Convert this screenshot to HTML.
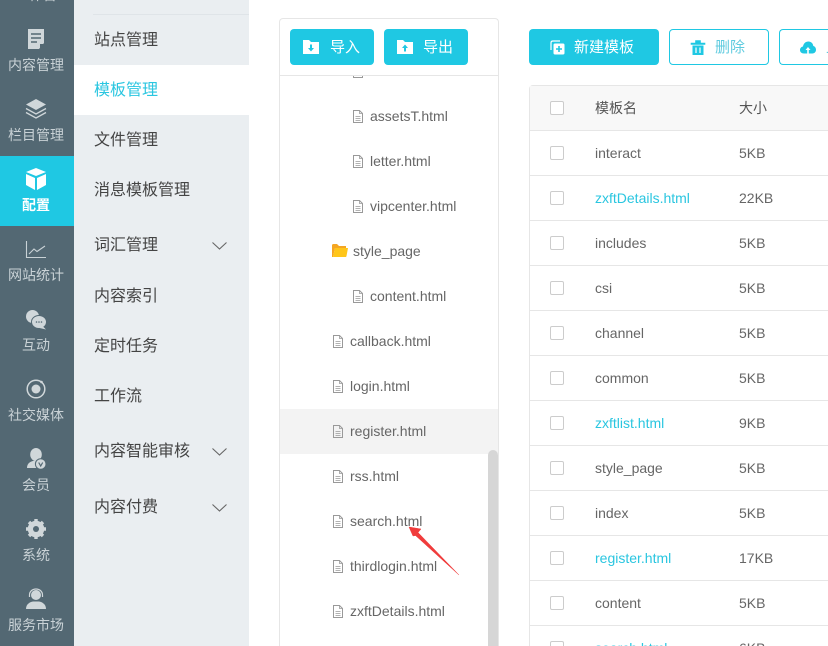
<!DOCTYPE html>
<html lang="zh"><head><meta charset="utf-8"><style>
html,body{margin:0;padding:0;background:#fff;width:828px;height:646px;overflow:hidden}
#w{position:relative;width:828px;height:646px;overflow:hidden;font-family:"Liberation Sans","Noto Sans CJK SC",sans-serif;font-size:14px;color:#666}
.a{position:absolute}
.side{left:0;top:0;width:74px;height:646px;background:#536873}
.lab{position:absolute;left:0;width:72px;text-align:center;color:#c9d2d6;font-size:14px;line-height:20px;white-space:nowrap}
.sub{left:74px;top:0;width:175px;height:646px;background:#eaeef1}
.m{position:absolute;left:94px;font-size:16px;line-height:24px;color:#444;white-space:nowrap}
.t{position:absolute;font-size:14px;line-height:20px;color:#666;white-space:nowrap}
.btn{position:absolute;top:29px;height:36px;border-radius:4px;box-sizing:border-box;font-size:15px;line-height:36px;white-space:nowrap}
.f{background:#1fc8e3;color:#fff}
.o{border:1px solid #1fc8e3;color:#5fcbdf;line-height:34px;background:#fff}
.cb{position:absolute;left:550px;width:14px;height:14px;border:1px solid #ccc;border-radius:2px;box-sizing:border-box;background:#fff}
.ln{position:absolute;left:530px;width:298px;height:1px;background:#e6e6e6}
.lnk{color:#2ac6e0}
svg{position:absolute;overflow:visible}
</style></head><body><div id="w">
<div class="a side"></div>
<div class="a" style="left:0;top:156px;width:74px;height:70px;background:#1fc8e3"></div>
<div class="a" style="left:0;top:0;width:72px;height:5px;overflow:hidden"><div class="lab" style="top:-15px">工作台</div></div>
<svg style="left:27px;top:29px" width="18" height="20" viewBox="0 0 18 20"><path d="M1 0H17V14L12 20H1Z" fill="#d0d7da"/><path d="M4 5H14M4 9H14M4 13H10" stroke="#536873" stroke-width="1.600"/><path d="M13 20V15H18" fill="#536873"/></svg>
<div class="lab" style="top:55px">内容管理</div>
<svg style="left:26px;top:98px" width="20" height="22" viewBox="0 0 20 22"><path d="M10 1L20 6.500 10 12 0 6.500Z" fill="#d0d7da"/><path d="M0 10.500L10 16 20 10.500M0 14.500L10 20 20 14.500" fill="none" stroke="#d0d7da" stroke-width="1.300"/></svg>
<div class="lab" style="top:125px">栏目管理</div>
<svg style="left:26px;top:168px" width="20" height="22" viewBox="0 0 20 22"><path d="M10 0L20 4 10 8 0 4Z" fill="#fff"/><path d="M0 6L9 10V22L0 17Z" fill="#fff"/><path d="M20 6L11 10V22L20 17Z" fill="#fff"/></svg>
<div class="lab" style="top:195px;color:#fff;font-weight:bold">配置</div>
<svg style="left:26px;top:241px" width="20" height="17" viewBox="0 0 20 17"><path d="M.5 0V16.500H20M3 13L8 8 11 10.500 19 5" fill="none" stroke="#c9d2d6" stroke-width="1.100"/></svg>
<div class="lab" style="top:265px">网站统计</div>
<svg style="left:26px;top:310px" width="21" height="20" viewBox="0 0 21 20"><ellipse cx="6.500" cy="6.500" rx="6.500" ry="6.500" fill="#d0d7da"/><ellipse cx="13" cy="12" rx="7.500" ry="6.500" fill="#d0d7da" stroke="#536873" stroke-width="1"/><path d="M16.500 16L20 19.500 13.500 18Z" fill="#d0d7da"/><circle cx="10.500" cy="12" r=".8" fill="#536873"/><circle cx="13" cy="12" r=".8" fill="#536873"/><circle cx="15.500" cy="12" r=".8" fill="#536873"/></svg>
<div class="lab" style="top:335px">互动</div>
<svg style="left:26px;top:379px" width="20" height="20" viewBox="0 0 20 20"><circle cx="10" cy="10" r="8.800" fill="none" stroke="#d0d7da" stroke-width="1.500"/><circle cx="10" cy="10" r="4.500" fill="#d0d7da"/><circle cx="15.500" cy="3" r="1.300" fill="#d0d7da"/></svg>
<div class="lab" style="top:405px">社交媒体</div>
<svg style="left:26px;top:448px" width="20" height="22" viewBox="0 0 20 22"><ellipse cx="10" cy="6.500" rx="5.800" ry="6.500" fill="#d0d7da"/><path d="M1 20C1 15.500 4 13 10 12.500 13 12.500 15 13.500 16 15L10 20Z" fill="#d0d7da"/><circle cx="14.700" cy="16" r="5.300" fill="#d0d7da" stroke="#536873" stroke-width="1"/><path d="M12.700 14.500L14.700 18 16.700 14.500" fill="none" stroke="#536873" stroke-width="1.200"/></svg>
<div class="lab" style="top:475px">会员</div>
<svg style="left:26px;top:519px" width="20" height="20" viewBox="0 0 20 20"><circle cx="10" cy="10" r="6" fill="none" stroke="#d0d7da" stroke-width="4.500"/><path d="M10 0V20M0 10H20M3 3L17 17M17 3L3 17" stroke="#d0d7da" stroke-width="3.400"/><circle cx="10" cy="10" r="3" fill="#536873"/></svg>
<div class="lab" style="top:545px">系统</div>
<svg style="left:26px;top:588px" width="20" height="22" viewBox="0 0 20 22"><circle cx="10" cy="7" r="5" fill="#d0d7da"/><path d="M3.500 9V7C3.500 3.300 6.500 1 10 1S16.500 3.300 16.500 7V9" fill="none" stroke="#d0d7da" stroke-width="1.200"/><path d="M0 21C0 16 4 14 7 13.500H13C16 14 20 16 20 21Z" fill="#d0d7da"/></svg>
<div class="lab" style="top:615px">服务市场</div>

<div class="a sub"></div>
<div class="a" style="left:93px;top:14px;width:156px;height:1px;background:#dfe4e8"></div>
<div class="a" style="left:74px;top:65px;width:175px;height:50px;background:#fff"></div>
<div class="m" style="top:27px;margin-top:2px">站点管理</div>
<div class="m" style="top:79px;color:#2ac6e0">模板管理</div>
<div class="m" style="top:129px">文件管理</div>
<div class="m" style="top:179px">消息模板管理</div>
<div class="m" style="top:234px">词汇管理</div>
<div class="m" style="top:285px">内容索引</div>
<div class="m" style="top:335px">定时任务</div>
<div class="m" style="top:385px">工作流</div>
<div class="m" style="top:440px">内容智能审核</div>
<div class="m" style="top:496px">内容付费</div>
<svg style="left:212px;top:242px" width="15" height="8"><path d="M.5 .5L7.500 7 14.500 .5" fill="none" stroke="#666" stroke-width="1.100"/></svg>
<svg style="left:212px;top:448px" width="15" height="8"><path d="M.5 .5L7.500 7 14.500 .5" fill="none" stroke="#666" stroke-width="1.100"/></svg>
<svg style="left:212px;top:504px" width="15" height="8"><path d="M.5 .5L7.500 7 14.500 .5" fill="none" stroke="#666" stroke-width="1.100"/></svg>

<!-- tree panel -->
<div class="a" style="left:279px;top:18px;width:220px;height:628px;box-sizing:border-box;border:1px solid #e6e6e6;border-bottom:none;border-radius:4px 4px 0 0;background:#fff"></div>
<div class="a" style="left:280px;top:75px;width:218px;height:1px;background:#e6e6e6"></div>
<div class="a" style="left:280px;top:409px;width:218px;height:45px;background:#f3f3f3"></div>
<div class="a" style="left:488px;top:450px;width:10px;height:196px;background:#d6d6d6;border-radius:5px 5px 0 0"></div>
<div class="btn f" style="left:290px;width:84px"><span class="a" style="left:40px;top:1px">导入</span></div>
<div class="btn f" style="left:384px;width:84px"><span class="a" style="left:39px;top:1px">导出</span></div>
<svg style="left:303px;top:40px" width="16" height="14" viewBox="0 0 16 14"><path d="M0 0H6L8 2H16V14H0Z" fill="#fff"/><path d="M7 4.500H9V8H11L8 11.500 5 8H7Z" fill="#1fc8e3"/></svg>
<svg style="left:397px;top:40px" width="16" height="14" viewBox="0 0 16 14"><path d="M0 0H6L8 2H16V14H0Z" fill="#fff"/><path d="M7 11.500H9V8H11L8 4.500 5 8H7Z" fill="#1fc8e3"/></svg>

<svg width="0" height="0"><defs><g id="fi"><path d="M.5 .5H6.500L9.500 3.500V12.500H.5Z" fill="none" stroke="#999"/><path d="M6.500 .5V3.500H9.500M2.500 6.500H7.500M2.500 8.500H7.500M2.500 10.500H7.500" fill="none" stroke="#999" stroke-width=".8"/></g></defs></svg>
<svg style="left:353px;top:76px" width="10" height="2"><path d="M.5 0V1.500H9.500V0" fill="none" stroke="#999"/></svg>
<svg style="left:353px;top:110px" width="11" height="14"><use href="#fi"/></svg><div class="t" style="left:370px;top:106px">assetsT.html</div>
<svg style="left:353px;top:155px" width="11" height="14"><use href="#fi"/></svg><div class="t" style="left:370px;top:151px">letter.html</div>
<svg style="left:353px;top:200px" width="11" height="14"><use href="#fi"/></svg><div class="t" style="left:370px;top:196px">vipcenter.html</div>
<svg style="left:332px;top:244px" width="16" height="13" viewBox="0 0 16 13"><path d="M0 1.500C0 .5 .5 0 1.500 0H5L7 2H14V4H3L1 13H0Z" fill="#f5a623"/><path d="M3 4H16L14.500 12C14.400 12.700 14 13 13.500 13H1Z" fill="#ffc61a"/></svg>
<div class="t" style="left:353px;top:241px">style_page</div>
<svg style="left:353px;top:290px" width="11" height="14"><use href="#fi"/></svg><div class="t" style="left:370px;top:286px">content.html</div>
<svg style="left:333px;top:335px" width="11" height="14"><use href="#fi"/></svg><div class="t" style="left:350px;top:331px">callback.html</div>
<svg style="left:333px;top:380px" width="11" height="14"><use href="#fi"/></svg><div class="t" style="left:350px;top:376px">login.html</div>
<svg style="left:333px;top:425px" width="11" height="14"><use href="#fi"/></svg><div class="t" style="left:350px;top:421px">register.html</div>
<svg style="left:333px;top:470px" width="11" height="14"><use href="#fi"/></svg><div class="t" style="left:350px;top:466px">rss.html</div>
<svg style="left:333px;top:515px" width="11" height="14"><use href="#fi"/></svg><div class="t" style="left:350px;top:511px">search.html</div>
<svg style="left:333px;top:560px" width="11" height="14"><use href="#fi"/></svg><div class="t" style="left:350px;top:556px">thirdlogin.html</div>
<svg style="left:333px;top:605px" width="11" height="14"><use href="#fi"/></svg><div class="t" style="left:350px;top:601px">zxftDetails.html</div>
<svg style="left:405px;top:520px" width="60" height="60" viewBox="0 0 60 60"><path d="M4 7L16 9 13 12.500 54 55 10.500 15.500 8 16Z" fill="#f03c3c" stroke="#f03c3c" stroke-width=".5" stroke-linejoin="round"/></svg>

<!-- top buttons -->
<div class="btn f" style="left:529px;width:130px"><span class="a" style="left:45px;top:1px">新建模板</span></div>
<svg style="left:550px;top:40px" width="15" height="15" viewBox="0 0 15 15"><path d="M1 10V3C1 1.500 1.500 1 3 1H10" fill="none" stroke="#fff" stroke-width="1.200"/><rect x="3.500" y="3.500" width="11" height="11" rx="1.500" fill="#fff"/><path d="M9 6V12M6 9H12" stroke="#1fc8e3" stroke-width="1.600"/></svg>
<div class="btn o" style="left:669px;width:100px"><span class="a" style="left:45px;top:1px">删除</span></div>
<svg style="left:691px;top:40px" width="14" height="15" viewBox="0 0 14 15"><path d="M0 3H14V4.500H0ZM4.500 3V.5H9.500V3" fill="#1fc8e3" stroke="#1fc8e3" stroke-width=".6"/><path d="M1.500 5.500H12.500V15H1.500Z" fill="#1fc8e3"/><path d="M5 7.500V13M9 7.500V13" stroke="#fff" stroke-width="1.200"/></svg>
<div class="btn o" style="left:779px;width:49px;border-right:none;border-radius:4px 0 0 4px;overflow:hidden"><span class="a" style="left:46px;top:1px">上传</span></div>
<svg style="left:800px;top:41px" width="16" height="13" viewBox="0 0 16 13"><path d="M4 12.500C1.500 12.500 0 11 0 9 0 7 1.500 5.700 3 5.500 3.500 2.500 5.500 .5 8.500 .5 11 .5 13 2.300 13.300 5 15 5.300 16 7 16 8.800 16 11 14.500 12.500 12.500 12.500Z" fill="#1fc8e3"/><path d="M7.200 12.500V9H5.500L8 6 10.500 9H8.800V12.500Z" fill="#fff"/></svg>

<!-- table -->
<div class="a" style="left:529px;top:85px;width:299px;height:561px;box-sizing:border-box;border:1px solid #e6e6e6;border-right:none;border-bottom:none;border-radius:4px 0 0 0;background:#fff"></div>
<div class="a" style="left:530px;top:86px;width:298px;height:44px;background:#f8f8f8"></div>
<div class="ln" style="top:130px"></div><div class="ln" style="top:175px"></div><div class="ln" style="top:220px"></div><div class="ln" style="top:265px"></div><div class="ln" style="top:310px"></div><div class="ln" style="top:355px"></div><div class="ln" style="top:400px"></div><div class="ln" style="top:445px"></div><div class="ln" style="top:490px"></div><div class="ln" style="top:535px"></div><div class="ln" style="top:580px"></div><div class="ln" style="top:625px"></div>
<div class="cb" style="top:101px"></div><div class="t" style="left:595px;top:98px;color:#555">模板名</div><div class="t" style="left:739px;top:98px;color:#555">大小</div>
<div class="cb" style="top:146px"></div><div class="t" style="left:595px;top:143px">interact</div><div class="t" style="left:739px;top:143px">5KB</div>
<div class="cb" style="top:191px"></div><div class="t lnk" style="left:595px;top:188px">zxftDetails.html</div><div class="t" style="left:739px;top:188px">22KB</div>
<div class="cb" style="top:236px"></div><div class="t" style="left:595px;top:233px">includes</div><div class="t" style="left:739px;top:233px">5KB</div>
<div class="cb" style="top:281px"></div><div class="t" style="left:595px;top:278px">csi</div><div class="t" style="left:739px;top:278px">5KB</div>
<div class="cb" style="top:326px"></div><div class="t" style="left:595px;top:323px">channel</div><div class="t" style="left:739px;top:323px">5KB</div>
<div class="cb" style="top:371px"></div><div class="t" style="left:595px;top:368px">common</div><div class="t" style="left:739px;top:368px">5KB</div>
<div class="cb" style="top:416px"></div><div class="t lnk" style="left:595px;top:413px">zxftlist.html</div><div class="t" style="left:739px;top:413px">9KB</div>
<div class="cb" style="top:461px"></div><div class="t" style="left:595px;top:458px">style_page</div><div class="t" style="left:739px;top:458px">5KB</div>
<div class="cb" style="top:506px"></div><div class="t" style="left:595px;top:503px">index</div><div class="t" style="left:739px;top:503px">5KB</div>
<div class="cb" style="top:551px"></div><div class="t lnk" style="left:595px;top:548px">register.html</div><div class="t" style="left:739px;top:548px">17KB</div>
<div class="cb" style="top:596px"></div><div class="t" style="left:595px;top:593px">content</div><div class="t" style="left:739px;top:593px">5KB</div>
<div class="cb" style="top:641px;height:5px;border-bottom:none;border-radius:2px 2px 0 0"></div><div class="t lnk" style="left:595px;top:638px;height:8px;overflow:hidden">search.html</div><div class="t" style="left:739px;top:638px;height:8px;overflow:hidden">6KB</div>
</div></body></html>
